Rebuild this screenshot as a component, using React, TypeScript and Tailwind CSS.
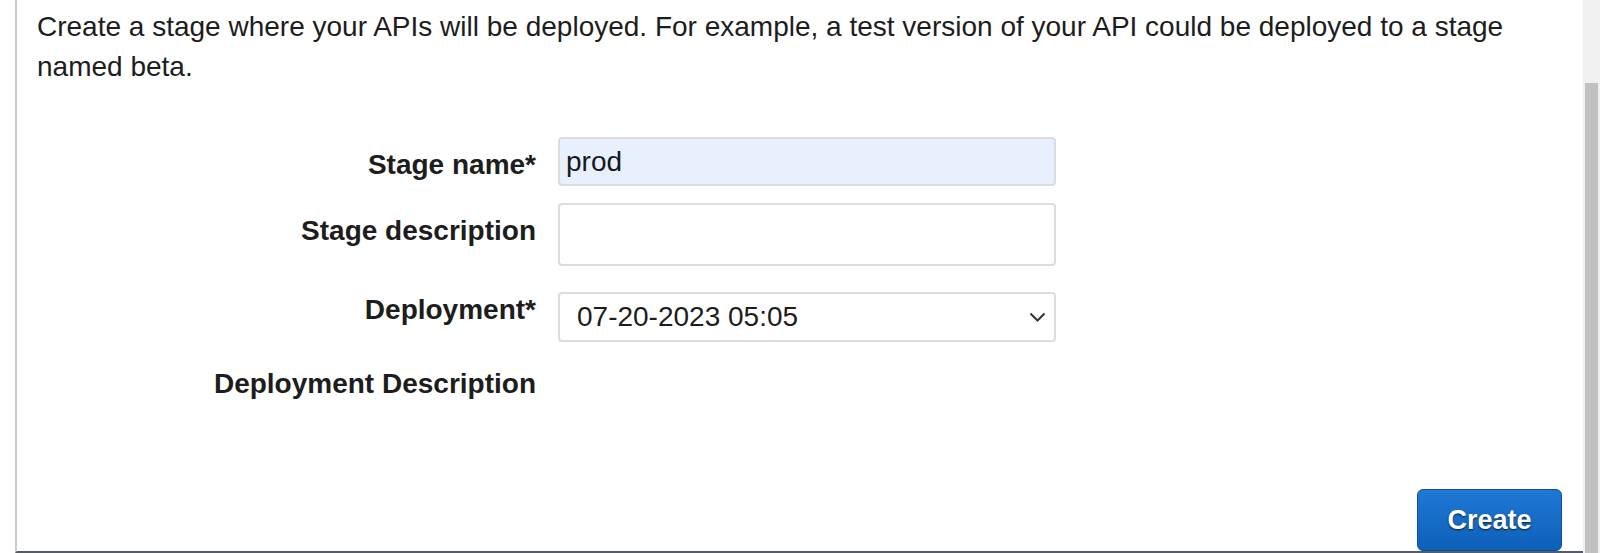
import React from 'react';

// Stage creation panel, old-style API console form
const FONT = "font-['Liberation_Sans',Arial,sans-serif]";

const Chevron: React.FC = () => (
  <svg width="17" height="10" viewBox="0 0 17 10" fill="none">
    <path d="M1.5 1.5l7 7 7-7" stroke="#333" strokeWidth="2" />
  </svg>
);

const App: React.FC = () => {
  return (
    <div className={`flex h-[553px] w-[1600px] overflow-hidden bg-white ${FONT}`}>
      {/* Scrolled content */}
      <div className="flex-1 pl-[15px]">
        <div className="flex h-full flex-col border-b-2 border-l-2 border-b-[#555b66] border-l-[#cccccc] pl-[20px] pr-[21px] pt-[7px] text-[#1d1d1d]">
          <p className="text-[28px] leading-[40px]">
            Create a stage where your APIs will be deployed. For example, a test version of your API could be deployed to a stage named beta.
          </p>

          <div className="mt-[50px] grid grid-cols-[499px_498px] gap-x-[22px]">
            {/* Stage name */}
            <label className="pt-[8px] text-right text-[28px] font-bold leading-[40px]">Stage name*</label>
            <input
              readOnly
              value="prod"
              className="h-[49px] rounded-[4px] border-2 border-[#dcdcdc] bg-[#e8f0fe] pl-[6px] text-[28px] text-[#16191f] outline-none"
            />

            {/* Stage description */}
            <label className="mt-[17px] pt-[8px] text-right text-[28px] font-bold leading-[40px]">Stage description</label>
            <input
              readOnly
              value=""
              className="mt-[17px] h-[63px] rounded-[4px] border-2 border-[#dcdcdc] bg-white pl-[6px] text-[28px] outline-none"
            />

            {/* Deployment */}
            <label className="mt-[24px] text-right text-[28px] font-bold leading-[40px]">Deployment*</label>
            <div className="mt-[26px] flex h-[50px] items-center justify-between rounded-[4px] border-2 border-[#dcdcdc] bg-white pl-[17px] pr-[8px]">
              <span className="text-[28px]">07-20-2023 05:05</span>
              <Chevron />
            </div>

            {/* Deployment description */}
            <label className="mt-[22px] text-right text-[28px] font-bold leading-[40px]">Deployment Description</label>
            <div />
          </div>

          <div className="mt-auto flex justify-end">
            <button className="h-[62px] w-[145px] rounded-[6px] border border-[#0a519e] bg-gradient-to-b from-[#1f78d6] to-[#0d60b8] text-[27px] font-bold text-white [text-shadow:0_1px_2px_rgba(0,0,0,0.75)]">
              Create
            </button>
          </div>
        </div>
      </div>

      {/* Vertical scrollbar */}
      <div className="w-[17px] bg-[#f0f0f0] pl-[2px] pr-[2px] pt-[83px]">
        <div className="h-full bg-[#c1c1c1]" />
      </div>
    </div>
  );
};

export default App;
